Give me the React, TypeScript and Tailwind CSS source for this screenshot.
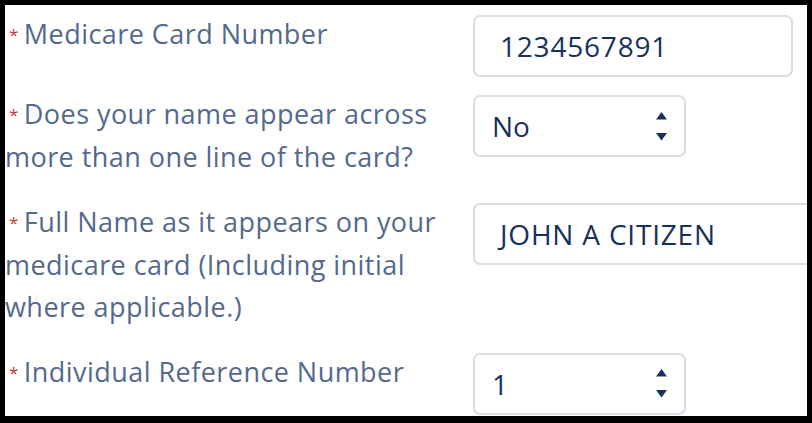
import { ReactNode } from "react";

const font = { fontFamily: '"Open Sans", "Noto Sans", sans-serif' };

function Label({ children }: { children: ReactNode }) {
  return (
    <div className="-mt-[2px] w-[442px] shrink-0 pr-[4px] text-[27px] leading-[42.5px] tracking-[0.45px] text-[#54698d]">
      <abbr className="ml-[4px] mr-[5px] align-[3px] text-[17px] leading-none text-[#c23934] no-underline">*</abbr>
      {children}
    </div>
  );
}

function Arrows() {
  return (
    <svg width="11" height="29" viewBox="0 0 11 29" className="text-[#16325c]">
      <path d="M5.5 0 L11 7.5 L0 7.5 Z" fill="currentColor" />
      <path d="M0 21 L11 21 L5.5 28.5 Z" fill="currentColor" />
    </svg>
  );
}

function TextInput({ value, width }: { value: string; width: string }) {
  return (
    <div
      className={`${width} flex h-[62px] shrink-0 items-center rounded-[7px] border-2 border-[#d8dde6] bg-white pl-[25px] text-[28px] tracking-[0.8px] text-[#16325c]`}
    >
      {value}
    </div>
  );
}

function Select({ value }: { value: string }) {
  return (
    <div className="flex h-[62px] w-[213px] shrink-0 items-center justify-between rounded-[7px] border-2 border-[#d8dde6] bg-white pl-[17px] pr-[17px] text-[28px] text-[#16325c]">
      <span>{value}</span>
      <Arrows />
    </div>
  );
}

export default function App() {
  return (
    <div className="h-[423px] w-[812px] bg-black pb-[7px] pl-[5px] pr-[5px] pt-[5px]" style={font}>
      <div className="h-full w-full overflow-hidden bg-white pt-[10px]">
        <div className="flex items-start gap-[26px]">
          <Label>Medicare Card Number</Label>
          <TextInput value="1234567891" width="w-[320px]" />
        </div>
        <div className="mt-[18px] flex items-start gap-[26px]">
          <Label>Does your name appear across more than one line of the card?</Label>
          <Select value="No" />
        </div>
        <div className="mt-[25px] flex items-start gap-[26px]">
          <Label>Full Name as it appears on your medicare card (Including initial where applicable.)</Label>
          <TextInput value="JOHN A CITIZEN" width="w-[360px]" />
        </div>
        <div className="mt-[24px] flex items-start gap-[26px]">
          <Label>Individual Reference Number</Label>
          <Select value="1" />
        </div>
      </div>
    </div>
  );
}
